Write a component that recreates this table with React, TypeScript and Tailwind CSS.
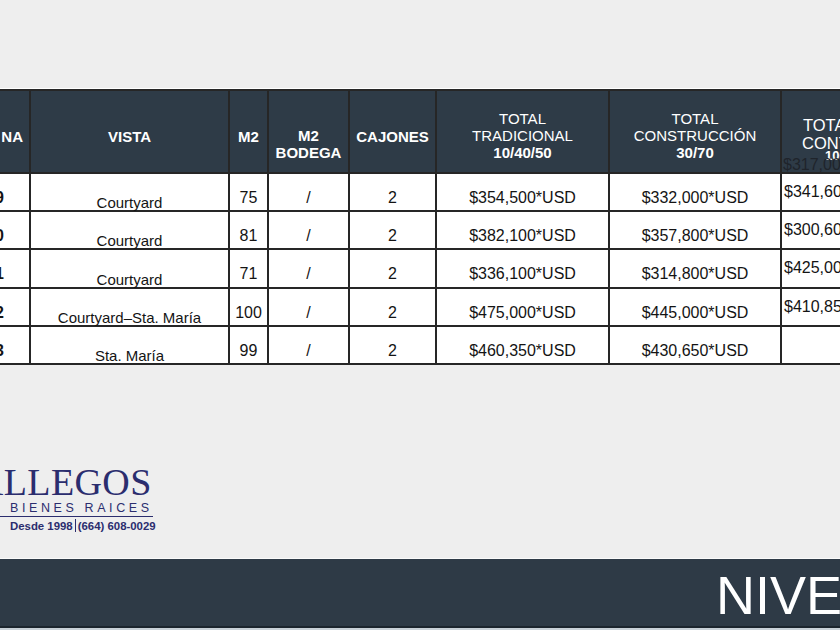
import React from "react";

type Row = {
  unit: string;
  vista: string;
  m2: string;
  trad: string;
  cons: string;
  cont: string;
  h: string;
};

const ROWS: Row[] = [
  { unit: "109", vista: "Courtyard", m2: "75", trad: "$354,500*USD", cons: "$332,000*USD", cont: "$341,600*USD", h: "h-[38px]" },
  { unit: "110", vista: "Courtyard", m2: "81", trad: "$382,100*USD", cons: "$357,800*USD", cont: "$300,600*USD", h: "h-[38px]" },
  { unit: "111", vista: "Courtyard", m2: "71", trad: "$336,100*USD", cons: "$314,800*USD", cont: "$425,000*USD", h: "h-[39px]" },
  { unit: "112", vista: "Courtyard–Sta. María", m2: "100", trad: "$475,000*USD", cons: "$445,000*USD", cont: "$410,850*USD", h: "h-[38px]" },
  { unit: "113", vista: "Sta. María", m2: "99", trad: "$460,350*USD", cons: "$430,650*USD", cont: "", h: "h-[38px]" },
];

const cell = "shrink-0 border-r-2 border-b-2 border-[#262626]";
const W = ["w-[71px]", "w-[199px]", "w-[39px]", "w-[81px]", "w-[87px]", "w-[173px]", "w-[172px]", "w-[160px]"];

function HeaderRow() {
  const single = "flex items-center justify-center pt-[10px] font-bold";
  const multi = "flex flex-col items-center justify-end pb-[11px] text-center";
  return (
    <div className="flex h-[83px] bg-[#2e3b47] text-[15px] leading-[17px] text-white">
      <div className={`${cell} ${W[0]} flex items-center justify-end pr-[6px] pt-[10px] font-bold`}>NA</div>
      <div className={`${cell} ${W[1]} ${single}`}>VISTA</div>
      <div className={`${cell} ${W[2]} ${single}`}>M2</div>
      <div className={`${cell} ${W[3]} ${multi} font-bold`}>
        <span>M2</span>
        <span>BODEGA</span>
      </div>
      <div className={`${cell} ${W[4]} ${single}`}>CAJONES</div>
      <div className={`${cell} ${W[5]} ${multi}`}>
        <span>TOTAL</span>
        <span>TRADICIONAL</span>
        <span className="font-bold">10/40/50</span>
      </div>
      <div className={`${cell} ${W[6]} ${multi}`}>
        <span>TOTAL</span>
        <span>CONSTRUCCIÓN</span>
        <span className="font-bold">30/70</span>
      </div>
      <div className={`${cell} ${W[7]} relative flex flex-col pt-[25px] text-[16.5px] leading-[18px]`}>
        <span className="pl-[21px]">TOTAL</span>
        <span className="pl-[20px]">CONTADO</span>
        <span className="-mt-[3px] pl-[43px] text-[13px] font-bold leading-[13px]">100%</span>
        <span className="absolute left-[1px] top-[65px] text-[16px] leading-[18px] text-[#1f242b]">$317,000*USD</span>
      </div>
    </div>
  );
}

function DataRow({ r }: { r: Row }) {
  const center = "flex justify-center pt-[15px] leading-[18px]";
  return (
    <div className={`flex ${r.h} bg-white text-[#141414]`}>
      <div className={`${cell} ${W[0]} flex justify-end pr-[25px] pt-[15px] text-[16px] font-bold leading-[18px]`}>{r.unit}</div>
      <div className={`${cell} ${W[1]} flex items-end justify-center text-[15px] leading-[15px]`}>{r.vista}</div>
      <div className={`${cell} ${W[2]} ${center} text-[16px]`}>{r.m2}</div>
      <div className={`${cell} ${W[3]} ${center} text-[16px]`}>/</div>
      <div className={`${cell} ${W[4]} ${center} text-[16px]`}>2</div>
      <div className={`${cell} ${W[5]} ${center} text-[16px]`}>{r.trad}</div>
      <div className={`${cell} ${W[6]} ${center} text-[16px]`}>{r.cons}</div>
      <div className={`${cell} ${W[7]} pl-[2px] pt-[9px] text-[16px] leading-[18px]`}>{r.cont}</div>
    </div>
  );
}

export default function App() {
  return (
    <div
      className="flex h-[630px] w-[840px] flex-col overflow-hidden bg-[#eeeeee]"
      style={{ fontFamily: '"Liberation Sans", Arial, sans-serif' }}
    >
      <div className="h-[88px] shrink-0" />
      <div className="h-px shrink-0 bg-white" />

      <div className="-ml-[40px] w-[982px] shrink-0 border-t-2 border-[#262626]">
        <HeaderRow />
        {ROWS.map((r) => (
          <DataRow key={r.unit} r={r} />
        ))}
      </div>

      <div className="mt-[98px] w-[153px] shrink-0 text-[#2b2d6e]">
        <div
          className="-ml-[52px] whitespace-nowrap text-[38px] leading-[38px] tracking-[0.4px]"
          style={{ fontFamily: '"Liberation Serif", "Times New Roman", serif' }}
        >
          GALLEGOS
        </div>
        <div className="mt-px whitespace-nowrap pl-[10px] text-[12.5px] leading-[13px] tracking-[3.6px]">
          BIENES RAICES
        </div>
        <div className="mt-px h-px bg-[#2b2d6e]" />
        <div className="mt-[2px] flex items-center whitespace-nowrap pl-[10px] text-[11.4px] font-semibold leading-[12px]">
          <span>Desde 1998</span>
          <div className="mx-[2px] h-[13px] border-l border-[#2b2d6e]" />
          <span>(664) 608-0029</span>
        </div>
      </div>

      <div className="flex-1" />

      <div className="h-px shrink-0 bg-[#fafafa]" />
      <div className="h-[67px] shrink-0 overflow-hidden bg-[#2e3a46] pl-[716px] pt-[9px]">
        <div className="whitespace-nowrap text-[54px] leading-[54px] text-white">NIVEL 1</div>
      </div>
      <div className="h-[2px] shrink-0 bg-[#1c252e]" />
      <div className="h-[2px] shrink-0 bg-[#c9d1d8]" />
    </div>
  );
}
